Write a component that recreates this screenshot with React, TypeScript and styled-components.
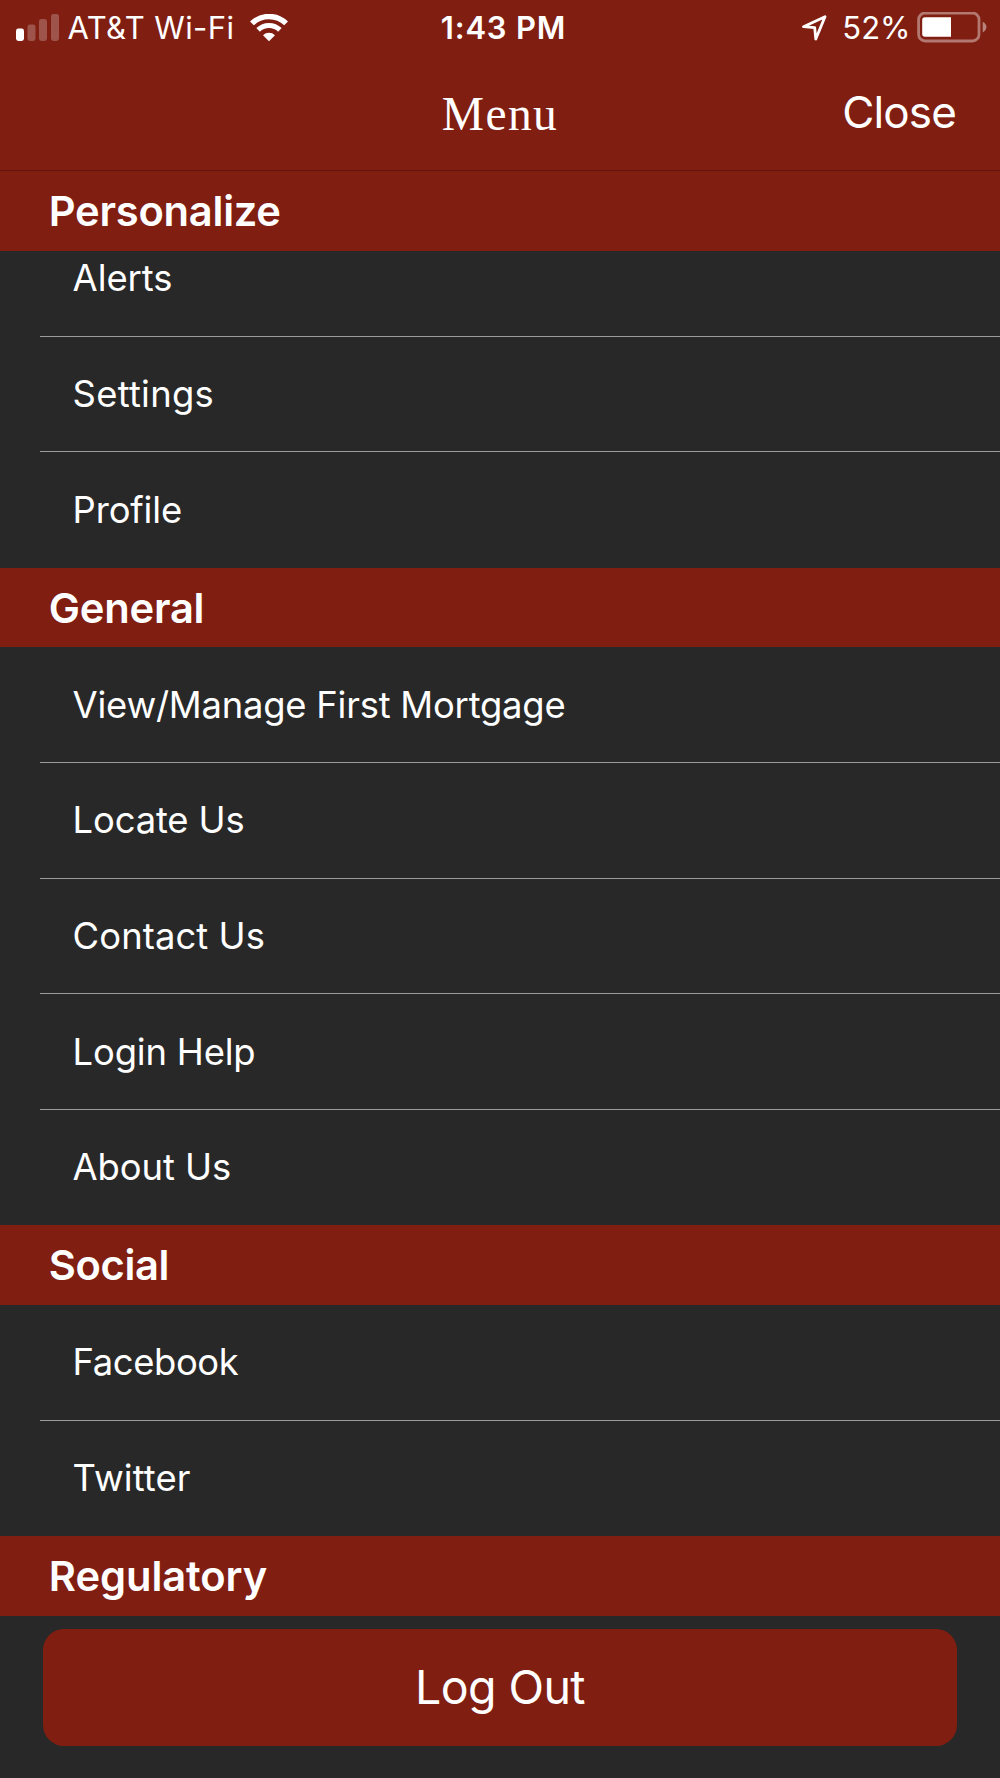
import React from "react";
import styled, { createGlobalStyle } from "styled-components";

const red = "#801e12";
const dark = "#282828";
const sans = `Inter, "Liberation Sans", sans-serif`;

const GlobalStyle = createGlobalStyle`
  body { margin: 0; background: ${dark}; }
  * { box-sizing: border-box; }
`;

const Screen = styled.div`
  width: 1000px;
  height: 1778px;
  display: flex;
  flex-direction: column;
  overflow: hidden;
  background: ${dark};
  color: #fff;
  font-family: ${sans};
  white-space: nowrap;
`;

const TopBar = styled.header`
  flex: none;
  height: 171.4px;
  background: ${red};
  border-bottom: 1px solid #64170e;
`;

const StatusBar = styled.div`
  height: 56px;
  display: grid;
  grid-template-columns: 1fr auto 1fr;
  align-items: center;
  padding: 0 13px 0 16px;
  font-size: 31px;
`;

const StatusGroup = styled.div<{ $end?: boolean }>`
  display: flex;
  align-items: center;
  justify-content: ${(p) => (p.$end ? "flex-end" : "flex-start")};
`;

const Carrier = styled.span`
  margin: 0 16px 0 8.5px;
  padding-bottom: 1.4px;
  letter-spacing: 0.41px;
`;

const Clock = styled.time`
  padding: 0 0 1.4px 4px;
  font-weight: 600;
  letter-spacing: 0.8px;
`;

const Percent = styled.span`
  margin: 0 6.5px 0 15.5px;
  padding-bottom: 1.4px;
`;

const NavBar = styled.nav`
  height: 114px;
  display: grid;
  grid-template-columns: 1fr auto 1fr;
  align-items: center;
  padding: 0 44px;
`;

const Title = styled.h1`
  grid-column: 2;
  margin: 0;
  padding-top: 1px;
  font: 400 47.5px "Liberation Serif", serif;
  letter-spacing: 1.4px;
`;

const CloseButton = styled.button`
  justify-self: end;
  padding: 0 0 2px;
  border: 0;
  background: none;
  color: inherit;
  font: 400 44px ${sans};
  letter-spacing: -0.85px;
`;

const Menu = styled.main`
  flex: none;
  height: 1444.6px;
  overflow: hidden;
`;

const SectionTitle = styled.h2<{ $tracking: number }>`
  position: relative;
  z-index: 1;
  margin: 0;
  height: 79.6px;
  display: flex;
  align-items: center;
  padding: 0 0 0 48.8px;
  background: ${red};
  font-size: 41.7px;
  font-weight: 600;
  letter-spacing: ${(p) => p.$tracking}px;
`;

const List = styled.ul<{ $scrolled: number }>`
  margin: ${(p) => -p.$scrolled}px 0 0;
  padding: 0;
  list-style: none;
`;

const Item = styled.li<{ $tracking: number }>`
  height: 115.6px;
  margin-left: 40px;
  padding: 0.2px 0 0 32.6px;
  display: flex;
  align-items: center;
  border-bottom: 1px solid #9c9c9c;
  font-size: 36.4px;
  letter-spacing: ${(p) => p.$tracking}px;

  &:last-child {
    border-bottom-color: transparent;
  }
`;

const Footer = styled.footer`
  flex: 1;
  padding: 12.7px 43px 0;
`;

const LogOut = styled.button`
  display: flex;
  align-items: center;
  justify-content: center;
  width: 100%;
  height: 117px;
  padding: 0;
  border: 0;
  border-radius: 21px;
  background: ${red};
  color: #fff;
  font: 400 46.5px ${sans};
  letter-spacing: -0.6px;
`;

type Entry = { label: string; tracking: number };
type Section = Entry & { scrolled?: number; items: Entry[] };

const sections: Section[] = [
  {
    label: "Personalize",
    tracking: -0.26,
    scrolled: 30,
    items: [
      { label: "Alerts", tracking: -0.05 },
      { label: "Settings", tracking: 0.25 },
      { label: "Profile", tracking: -0.15 },
    ],
  },
  {
    label: "General",
    tracking: -0.22,
    items: [
      { label: "View/Manage First Mortgage", tracking: -0.22 },
      { label: "Locate Us", tracking: -0.15 },
      { label: "Contact Us", tracking: 0.08 },
      { label: "Login Help", tracking: -0.18 },
      { label: "About Us", tracking: -0.08 },
    ],
  },
  {
    label: "Social",
    tracking: -0.4,
    items: [
      { label: "Facebook", tracking: -0.4 },
      { label: "Twitter", tracking: 0.1 },
    ],
  },
  { label: "Regulatory", tracking: -0.08, items: [] },
];

const SignalIcon = () => (
  <svg width="43" height="28" viewBox="0 0 43 28" fill="#fff">
    <rect x="0" y="14.6" width="8" height="12.3" rx="2.4" />
    <g opacity="0.24">
      <rect x="11.5" y="10.6" width="8" height="16.3" rx="2.4" />
      <rect x="23" y="5.1" width="8" height="21.8" rx="2.4" />
      <rect x="35" y="0" width="8" height="26.9" rx="2.4" />
    </g>
  </svg>
);

const WifiIcon = () => (
  <svg width="38" height="28" viewBox="0 0 38 28" fill="none" stroke="#fff">
    <path d="M1.9 9.4a24.6 24.6 0 0 1 34.2 0" strokeWidth="5.4" />
    <path d="M8.1 15.9a15.6 15.6 0 0 1 21.8 0" strokeWidth="5" />
    <path d="M19 27.2l-6-6a8.6 8.6 0 0 1 12 0z" fill="#fff" stroke="none" />
  </svg>
);

const LocationIcon = () => (
  <svg width="25" height="26" viewBox="0 0 25 26" fill="none" stroke="#fff" strokeWidth="2.8" strokeLinejoin="round">
    <path d="M1.5 11.7 23 1.7 13.8 24 12.7 12.6z" />
  </svg>
);

const BatteryIcon = () => (
  <svg width="70" height="31" viewBox="0 0 70 31">
    <rect x="1.6" y="1" width="60.4" height="28" rx="6.5" fill="none" stroke="#fff" strokeOpacity="0.4" strokeWidth="2.8" overflow="visible" />
    <path d="M8 5.2h26v19.6H8a2.8 2.8 0 0 1-2.8-2.8V8A2.8 2.8 0 0 1 8 5.2z" fill="#fff" />
    <path d="M65.7 9.8c5 2.6 5 8 0 10.6z" fill="#fff" fillOpacity="0.45" />
  </svg>
);

export default function App() {
  return (
    <Screen>
      <GlobalStyle />
      <TopBar>
        <StatusBar>
          <StatusGroup>
            <SignalIcon />
            <Carrier>AT&amp;T Wi-Fi</Carrier>
            <WifiIcon />
          </StatusGroup>
          <Clock>1:43 PM</Clock>
          <StatusGroup $end>
            <LocationIcon />
            <Percent>52%</Percent>
            <BatteryIcon />
          </StatusGroup>
        </StatusBar>
        <NavBar>
          <Title>Menu</Title>
          <CloseButton>Close</CloseButton>
        </NavBar>
      </TopBar>
      <Menu>
        {sections.map((section) => (
          <section key={section.label}>
            <SectionTitle $tracking={section.tracking}>{section.label}</SectionTitle>
            <List $scrolled={section.scrolled ?? 0}>
              {section.items.map((item) => (
                <Item key={item.label} $tracking={item.tracking}>
                  {item.label}
                </Item>
              ))}
            </List>
          </section>
        ))}
      </Menu>
      <Footer>
        <LogOut>Log Out</LogOut>
      </Footer>
    </Screen>
  );
}
